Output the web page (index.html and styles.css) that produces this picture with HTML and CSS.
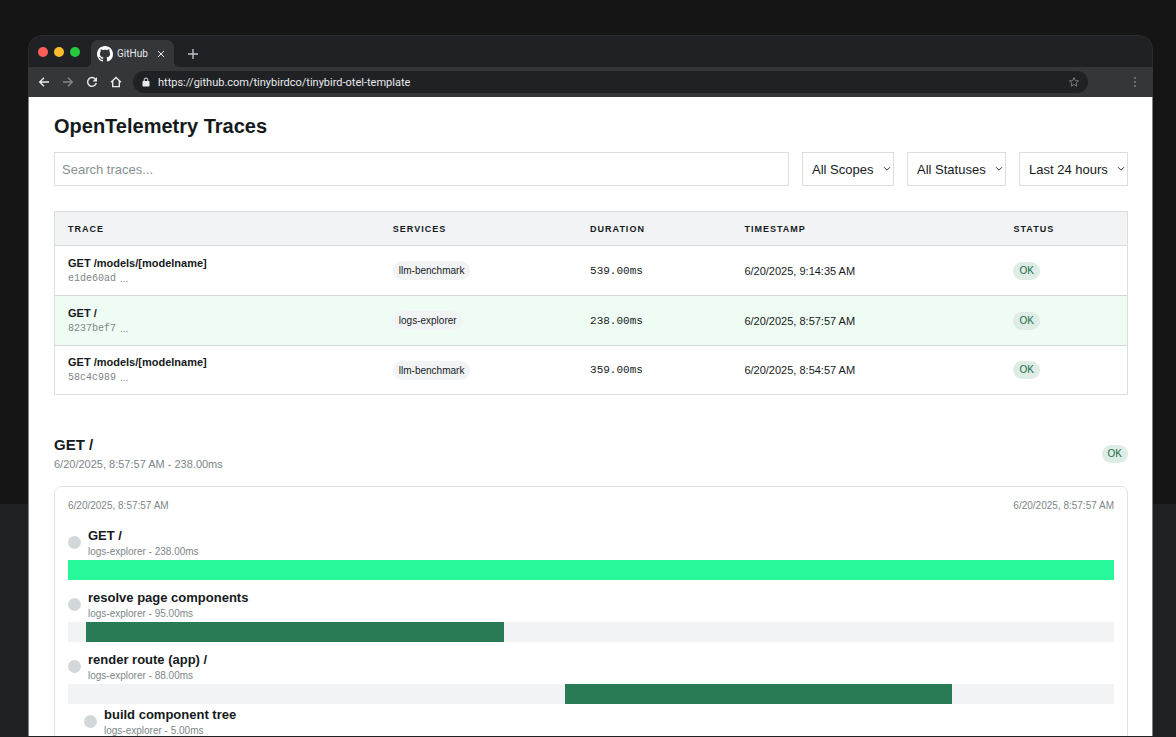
FILE: index.html
```html
<!DOCTYPE html>
<html lang="en">
<head>
<meta charset="utf-8">
<meta name="viewport" content="width=device-width, initial-scale=1">
<title>OpenTelemetry Traces</title>
<link rel="stylesheet" href="styles.css">
</head>
<body>
<div class="window">
  <header class="chrome">
    <div class="tab-strip">
      <div class="lights"><span class="light light-red"></span><span class="light light-yellow"></span><span class="light light-green"></span></div>
      <div class="tab">
        <svg class="tab-logo" viewBox="0 0 16 16" aria-hidden="true"><path d="M8 0C3.58 0 0 3.58 0 8c0 3.54 2.29 6.53 5.47 7.59.4.07.55-.17.55-.38 0-.19-.01-.82-.01-1.49-2.01.37-2.53-.49-2.69-.94-.09-.23-.48-.94-.82-1.13-.28-.15-.68-.52-.01-.53.63-.01 1.08.58 1.23.82.72 1.21 1.87.87 2.33.66.07-.52.28-.87.51-1.07-1.78-.2-3.64-.89-3.64-3.95 0-.87.31-1.59.82-2.15-.08-.2-.36-1.02.08-2.12 0 0 .67-.21 2.2.82.64-.18 1.32-.27 2-.27s1.36.09 2 .27c1.53-1.04 2.2-.82 2.2-.82.44 1.1.16 1.92.08 2.12.51.56.82 1.27.82 2.15 0 3.07-1.87 3.75-3.65 3.95.29.25.54.73.54 1.48 0 1.07-.01 1.93-.01 2.2 0 .21.15.46.55.38A8.01 8.01 0 0 0 16 8c0-4.42-3.58-8-8-8z"/></svg>
        <span class="tab-title">GitHub</span>
        <button class="icon-button tab-close" aria-label="Close tab"><svg class="icon-small" viewBox="0 0 8 8"><path d="M1 1l6 6M7 1L1 7"/></svg></button>
      </div>
      <button class="icon-button new-tab" aria-label="New tab"><svg class="icon" viewBox="0 0 12 12"><path d="M6 1v10M1 6h10"/></svg></button>
    </div>
    <div class="toolbar">
      <nav class="nav-buttons" aria-label="Browser">
        <button class="icon-button" aria-label="Back"><svg class="icon" viewBox="0 0 12 12"><path d="M11 6H2M6 1.7L1.7 6 6 10.3"/></svg></button>
        <button class="icon-button is-dim" aria-label="Forward"><svg class="icon" viewBox="0 0 12 12"><path d="M1 6h9M6 1.7L10.3 6 6 10.3"/></svg></button>
        <button class="icon-button" aria-label="Reload"><svg class="icon" viewBox="0 0 12 12"><path d="M9.7 3.5A4.4 4.4 0 1 0 10.3 7"/><path class="filled" d="M11 1v4.4H6.6z"/></svg></button>
        <button class="icon-button" aria-label="Home"><svg class="icon" viewBox="0 0 12 12"><path d="M1 6.2L6 1.5l5 4.7M2.7 5v5.6h6.6V5"/></svg></button>
      </nav>
      <div class="address">
        <svg class="lock" viewBox="0 0 8 10" aria-hidden="true"><rect x="0.5" y="4" width="7" height="5.5" rx="0.7"/><path d="M2.2 4.2V2.8a1.8 1.8 0 0 1 3.6 0v1.4"/></svg>
        <input class="url" type="text" aria-label="Address" value="https://github.com/tinybirdco/tinybird-otel-template">
        <button class="icon-button star" aria-label="Bookmark"><svg class="icon" viewBox="0 0 12 12"><path d="M6 1.6l1.3 3 3.2.3-2.4 2.1.7 3.2L6 8.5l-2.8 1.7.7-3.2L1.5 4.9l3.2-.3z"/></svg></button>
      </div>
      <button class="icon-button menu" aria-label="Menu"><svg class="dots" viewBox="0 0 4 12"><circle cx="2" cy="2" r="1"/><circle cx="2" cy="6" r="1"/><circle cx="2" cy="10" r="1"/></svg></button>
    </div>
  </header>

  <main class="page">
    <h1 class="page-title">OpenTelemetry Traces</h1>
    <form class="filters">
      <input class="search" type="text" placeholder="Search traces..." aria-label="Search traces">
      <span class="select-wrap"><select class="select" aria-label="Scope"><option>All Scopes</option></select><svg class="chevron" viewBox="0 0 8 6"><path d="M1 1.2l3 3 3-3"/></svg></span>
      <span class="select-wrap"><select class="select" aria-label="Status"><option>All Statuses</option></select><svg class="chevron" viewBox="0 0 8 6"><path d="M1 1.2l3 3 3-3"/></svg></span>
      <span class="select-wrap"><select class="select" aria-label="Time range"><option>Last 24 hours</option></select><svg class="chevron" viewBox="0 0 8 6"><path d="M1 1.2l3 3 3-3"/></svg></span>
    </form>

    <table class="traces">
      <colgroup><col class="col-trace"><col class="col-services"><col class="col-duration"><col class="col-time"><col class="col-status"></colgroup>
      <thead><tr><th>TRACE</th><th>SERVICES</th><th>DURATION</th><th>TIMESTAMP</th><th>STATUS</th></tr></thead>
      <tbody>
        <tr><td><div class="trace-name">GET /models/[modelname]</div><div class="trace-id"><code>e1de60ad</code><span>...</span></div></td><td><span class="pill">llm-benchmark</span></td><td class="duration">539.00ms</td><td>6/20/2025, 9:14:35 AM</td><td><span class="pill ok">OK</span></td></tr>
        <tr class="selected"><td><div class="trace-name">GET /</div><div class="trace-id"><code>8237bef7</code><span>...</span></div></td><td><span class="pill">logs-explorer</span></td><td class="duration">238.00ms</td><td>6/20/2025, 8:57:57 AM</td><td><span class="pill ok">OK</span></td></tr>
        <tr><td><div class="trace-name">GET /models/[modelname]</div><div class="trace-id"><code>58c4c989</code><span>...</span></div></td><td><span class="pill">llm-benchmark</span></td><td class="duration">359.00ms</td><td>6/20/2025, 8:54:57 AM</td><td><span class="pill ok">OK</span></td></tr>
      </tbody>
    </table>

    <section class="detail">
      <div class="detail-head">
        <div>
          <h2 class="detail-title">GET /</h2>
          <p class="detail-sub">6/20/2025, 8:57:57 AM - 238.00ms</p>
        </div>
        <span class="pill ok">OK</span>
      </div>
      <div class="card">
        <div class="range"><span>6/20/2025, 8:57:57 AM</span><span>6/20/2025, 8:57:57 AM</span></div>
        <div class="span">
          <div class="span-head"><i class="dot"></i><div><h3 class="span-name">GET /</h3><p class="span-meta">logs-explorer - 238.00ms</p></div></div>
          <div class="track"><div class="bar bar-root" style="width:100%"></div></div>
        </div>
        <div class="span">
          <div class="span-head"><i class="dot"></i><div><h3 class="span-name">resolve page components</h3><p class="span-meta">logs-explorer - 95.00ms</p></div></div>
          <div class="track"><div class="bar" style="margin-left:1.7%;width:39.95%"></div></div>
        </div>
        <div class="span">
          <div class="span-head"><i class="dot"></i><div><h3 class="span-name">render route (app) /</h3><p class="span-meta">logs-explorer - 88.00ms</p></div></div>
          <div class="track"><div class="bar" style="margin-left:47.5%;width:37%"></div></div>
          <div class="span child">
            <div class="span-head"><i class="dot"></i><div><h3 class="span-name">build component tree</h3><p class="span-meta">logs-explorer - 5.00ms</p></div></div>
          </div>
        </div>
      </div>
    </section>
  </main>
</div>
</body>
</html>
```

FILE: styles.css
```css
* { box-sizing: border-box; }
body {
  margin: 0;
  height: 100vh;
  display: flex;
  overflow: hidden;
  padding: 35px 23px 1px 28px;
  background: linear-gradient(#151515 504px, #202123 504px);
  font-family: "Liberation Sans", Arial, sans-serif;
  font-size: 11px;
  color: #151a1c;
}
h1, h2, h3, p { margin: 0; }
.window {
  flex: 1;
  min-width: 0;
  display: flex;
  flex-direction: column;
  overflow: hidden;
  border-radius: 14px 14px 0 0;
}

/* Browser frame */
.chrome { flex: none; font-family: Roboto, sans-serif; color: #e8eaed; }
.tab-strip {
  display: flex;
  align-items: flex-end;
  height: 32px;
  padding-left: 9px;
  background: #202124;
  border: 1px solid #2b2b2b;
  border-bottom: 0;
  border-radius: 14px 14px 0 0;
}
.lights { display: flex; gap: 6px; margin: 0 11px 10px 0; }
.light { width: 10px; height: 10px; border-radius: 50%; }
.light-red { background: #ff5f57; }
.light-yellow { background: #febc2e; }
.light-green { background: #28c840; }
.tab {
  position: relative;
  display: flex;
  align-items: center;
  height: 27px;
  padding: 0 7px 0 6px;
  border-radius: 7px 7px 0 0;
  background: #35363a;
}
.tab::before, .tab::after {
  content: "";
  position: absolute;
  bottom: 0;
  width: 5px;
  height: 5px;
}
.tab::before { left: -5px; background: radial-gradient(circle at 0 0, transparent 5px, #35363a 5px); }
.tab::after { right: -5px; background: radial-gradient(circle at 100% 0, transparent 5px, #35363a 5px); }
.tab-logo { width: 16px; height: 16px; fill: #fff; margin-right: 4px; }
.tab-title { font-size: 10px; }
.icon-button {
  display: flex;
  align-items: center;
  justify-content: center;
  padding: 0;
  border: 0;
  background: none;
  color: #e8eaed;
}
.tab-close { margin-left: 7px; width: 12px; height: 12px; }
.new-tab { width: 14px; height: 14px; margin: 0 0 6px 12px; color: #bdc1c6; }
.icon, .icon-small { width: 12px; height: 12px; fill: none; stroke: currentColor; stroke-width: 1.4; }
.icon-small { width: 8px; height: 8px; stroke-width: 1; }
.icon .filled { fill: currentColor; stroke: none; }
.is-dim { color: #85878b; }
.toolbar {
  display: flex;
  align-items: center;
  height: 30px;
  padding: 0 14px 0 10px;
  background: #35363a;
}
.nav-buttons { display: flex; gap: 12px; }
.address {
  flex: 1;
  display: flex;
  align-items: center;
  height: 22px;
  margin: 0 43px 0 11px;
  padding: 0 8px;
  border-radius: 11px;
  background: #202124;
}
.lock { width: 8px; height: 10px; fill: #e8eaed; margin-left: 1px; }
.lock path { fill: none; stroke: #e8eaed; }
.url {
  flex: 1;
  min-width: 0;
  margin-left: 8px;
  padding: 0;
  border: 0;
  background: none;
  color: #e8eaed;
  font: 11px Roboto, sans-serif;
}
.star { color: #7c7e82; }
.star .icon { stroke-width: 1; }
.menu { width: 8px; }
.dots { width: 4px; height: 12px; fill: #7c7e82; }

/* Page */
.page {
  flex: 1;
  min-height: 0;
  overflow: hidden;
  padding: 17px 24px 0 25px;
  border: solid #808284;
  border-width: 0 1px;
  background: #fff;
}
.page-title { font-size: 20px; line-height: 24px; }
.filters { display: flex; gap: 13px; margin-top: 14px; }
.search, .select {
  height: 34px;
  border: 1px solid #d9dfe1;
  border-radius: 0;
  background: #fff;
  font: 13px "Liberation Sans", Arial, sans-serif;
  color: #151a1c;
}
.search { flex: 1; min-width: 0; padding: 0 7px; }
.search::placeholder { color: #879092; }
.select-wrap { position: relative; }
.select { appearance: none; padding: 0 19px 0 9px; }
.chevron {
  position: absolute;
  right: 3px;
  top: 14px;
  width: 8px;
  height: 6px;
  fill: none;
  stroke: #303538;
  pointer-events: none;
}
.traces {
  width: 100%;
  margin-top: 25px;
  table-layout: fixed;
  border-spacing: 0;
  border: 1px solid #d9dfe1;
}
.col-trace { width: 30.3%; }
.col-services { width: 18.4%; }
.col-duration { width: 14.4%; }
.col-time { width: 25.1%; }
.col-status { width: 11.8%; }
.traces th {
  height: 34px;
  padding: 0 13px;
  border-bottom: 1px solid #d3d9db;
  background: #f2f3f5;
  text-align: left;
  font-size: 9px;
  letter-spacing: 1px;
}
.traces td { height: 50px; padding: 0 13px; border-bottom: 1px solid #d3d9db; }
.traces tbody tr:last-child td { height: 48px; border-bottom: 0; }
.selected td { background: #effcf4; }
.trace-name { font-weight: bold; line-height: 15px; }
.trace-id { display: flex; gap: 4px; font-size: 10px; line-height: 15px; color: #7c8688; }
.trace-id code { font: 10px/15px "Liberation Mono", monospace; }
.duration { font-family: "Liberation Mono", monospace; }
.pill {
  display: inline-block;
  padding: 0 6px;
  border-radius: 10px;
  background: #f2f3f5;
  font-size: 10px;
  line-height: 19px;
}
.ok { background: #ddece5; color: #246b48; line-height: 18px; }

.detail-head { display: flex; align-items: center; justify-content: space-between; margin-top: 40px; }
.detail-title { font-size: 15px; line-height: 20px; }
.detail-sub { font-size: 11px; line-height: 18px; color: #7c8688; }
.card {
  margin-top: 13px;
  padding: 12px 13px;
  border: 1px solid #dfe4e6;
  border-radius: 7px;
}
.range { display: flex; justify-content: space-between; margin-bottom: 12px; font-size: 10px; line-height: 14px; color: #7c8688; }
.span { margin-bottom: 7px; }
.child { margin: 0 0 0 16px; }
.span-head { display: flex; align-items: center; gap: 7px; height: 35px; }
.dot { width: 13px; height: 13px; border-radius: 50%; background: #d2d8da; }
.span-name { font-size: 13px; line-height: 18px; }
.span-meta { font-size: 10px; line-height: 14px; color: #7c8688; }
.track { height: 20px; background: #f2f3f5; }
.bar { height: 100%; background: #287b54; }
.bar-root { background: #27f99a; }
```
